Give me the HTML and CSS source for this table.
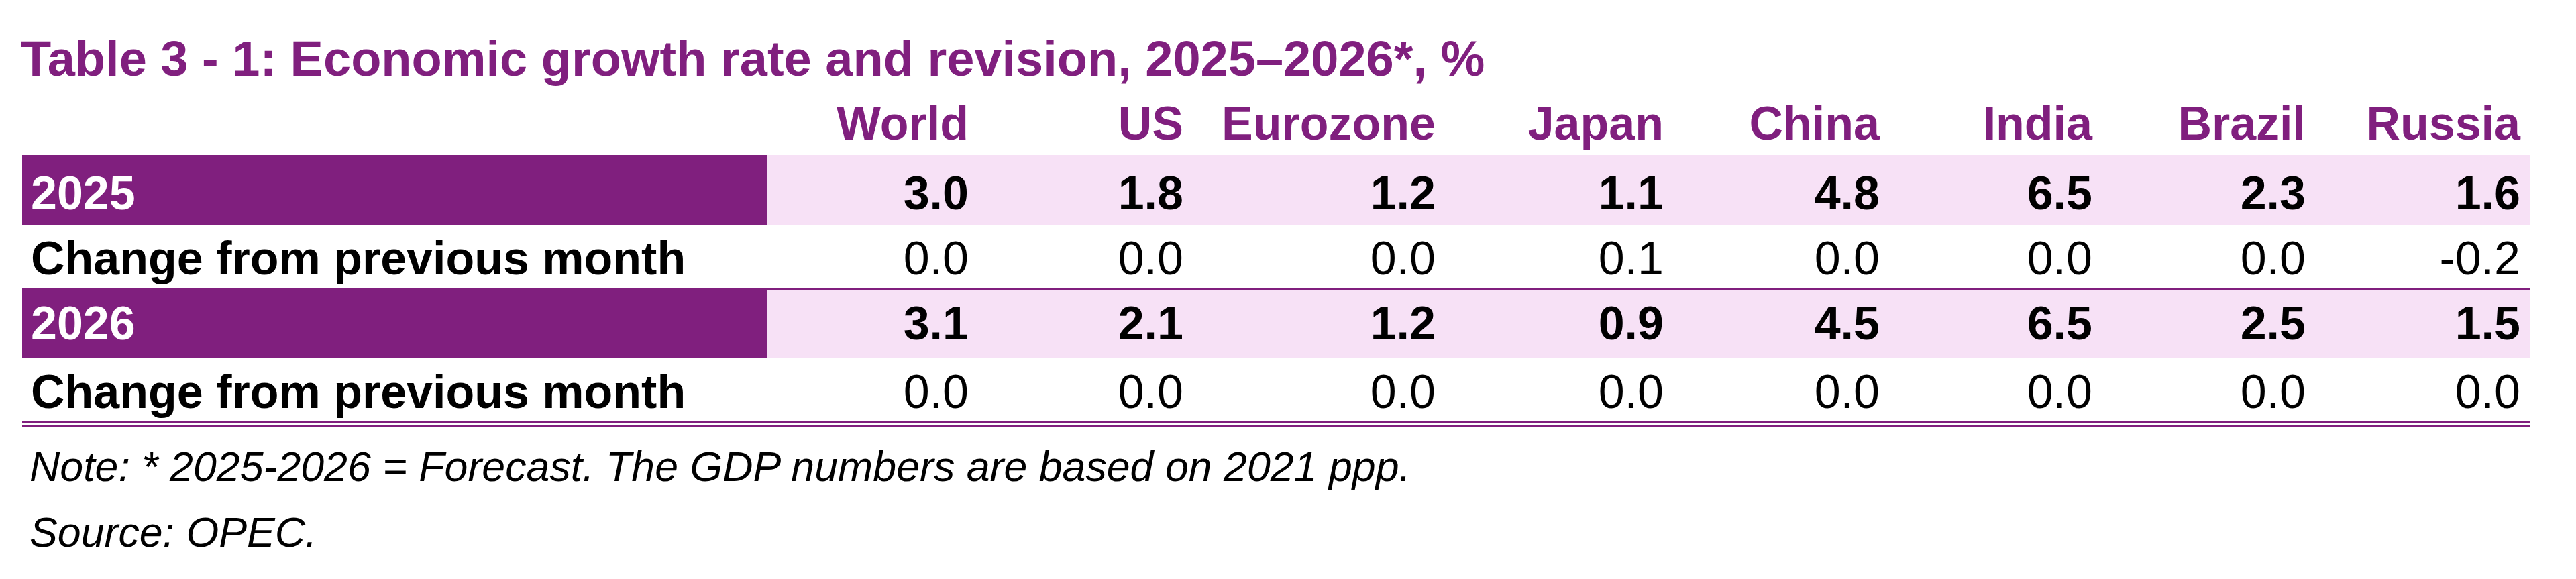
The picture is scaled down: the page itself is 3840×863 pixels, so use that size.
FILE: index.html
```html
<!DOCTYPE html>
<html lang="en">
<head>
<meta charset="utf-8">
<title>Table 3 - 1: Economic growth rate and revision, 2025–2026*, %</title>
<link rel="stylesheet" href="styles.css">
</head>
<body>
<main class="page">
  <h1 class="title">Table 3 - 1: Economic growth rate and revision, 2025–2026*, %</h1>
  <table class="growth">
    <colgroup>
      <col class="c-label">
      <col class="c-world">
      <col class="c-us">
      <col class="c-euro">
      <col class="c-japan">
      <col class="c-china">
      <col class="c-india">
      <col class="c-brazil">
      <col class="c-russia">
    </colgroup>
    <thead>
      <tr class="head">
        <th></th>
        <th>World</th>
        <th>US</th>
        <th>Eurozone</th>
        <th>Japan</th>
        <th>China</th>
        <th>India</th>
        <th>Brazil</th>
        <th>Russia</th>
      </tr>
    </thead>
    <tbody>
      <tr class="year year-a">
        <th>2025</th>
        <td>3.0</td><td>1.8</td><td>1.2</td><td>1.1</td><td>4.8</td><td>6.5</td><td>2.3</td><td>1.6</td>
      </tr>
      <tr class="change change-a">
        <th>Change from previous month</th>
        <td>0.0</td><td>0.0</td><td>0.0</td><td>0.1</td><td>0.0</td><td>0.0</td><td>0.0</td><td>-0.2</td>
      </tr>
      <tr class="year year-b">
        <th>2026</th>
        <td>3.1</td><td>2.1</td><td>1.2</td><td>0.9</td><td>4.5</td><td>6.5</td><td>2.5</td><td>1.5</td>
      </tr>
      <tr class="change change-b">
        <th>Change from previous month</th>
        <td>0.0</td><td>0.0</td><td>0.0</td><td>0.0</td><td>0.0</td><td>0.0</td><td>0.0</td><td>0.0</td>
      </tr>
    </tbody>
  </table>
  <div class="notes">
    <p>Note: * 2025-2026 = Forecast. The GDP numbers are based on 2021 ppp.</p>
    <p>Source: OPEC.</p>
  </div>
</main>
</body>
</html>
```
FILE: styles.css
```css
html, body {
  margin: 0;
  padding: 0;
  background: #ffffff;
  overflow: hidden;
}

.page {
  font-family: "Liberation Sans", Arial, sans-serif;
  color: #000000;
  padding-top: 51.4px;
}

.title {
  margin: 0 0 0 31px;
  font-size: 74px;
  line-height: 74px;
  font-weight: 700;
  color: #801f7e;
  white-space: nowrap;
}

.growth {
  margin-left: 33px;
  width: 3739px;
  table-layout: fixed;
  border-collapse: separate;
  border-spacing: 0;
  font-size: 70px;
}

.c-label  { width: 1110px; }
.c-world  { width: 316px; }
.c-us     { width: 320px; }
.c-euro   { width: 376px; }
.c-japan  { width: 340px; }
.c-china  { width: 322px; }
.c-india  { width: 317px; }
.c-brazil { width: 318px; }
.c-russia { width: 320px; }

.growth th,
.growth td {
  padding: 0 15px 0 0;
  text-align: right;
  white-space: nowrap;
  vertical-align: top;
}

.growth tbody th {
  text-align: left;
  padding-left: 13px;
  font-weight: 700;
}

.head th {
  color: #801f7e;
  font-weight: 700;
  line-height: 70px;
  padding-top: 23.3px;
  padding-bottom: 12.3px;
}

.year th,
.year td {
  font-weight: 700;
  background: #f7e1f6;
}

.year th {
  background: #801f7e;
  color: #ffffff;
}

.year-a th,
.year-a td {
  padding-top: 10px;
  line-height: 95px;
}

.year-b th,
.year-b td {
  line-height: 101px;
}

.change td {
  font-weight: 400;
}

.change-a th,
.change-a td {
  padding-top: 6.5px;
  line-height: 86.5px;
  border-bottom: 3px solid #801f7e;
}

.change-b th,
.change-b td {
  padding-top: 8.5px;
  line-height: 86.5px;
  border-bottom: 8px double #801f7e;
}

.notes {
  margin: 10.5px 0 0 44px;
  font-size: 62.7px;
  font-style: italic;
  line-height: 98px;
}

.notes p {
  margin: 0;
  white-space: nowrap;
}
```
